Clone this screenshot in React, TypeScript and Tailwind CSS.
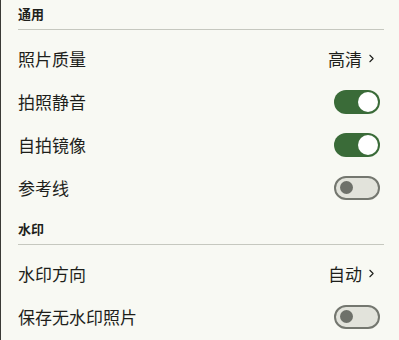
import { ChevronRight } from 'lucide-react'

type Row =
  | { label: string; kind: 'value'; value: string }
  | { label: string; kind: 'switch'; on: boolean }

const sections: { title: string; rows: Row[] }[] = [
  {
    title: '通用',
    rows: [
      { label: '照片质量', kind: 'value', value: '高清' },
      { label: '拍照静音', kind: 'switch', on: true },
      { label: '自拍镜像', kind: 'switch', on: true },
      { label: '参考线', kind: 'switch', on: false },
    ],
  },
  {
    title: '水印',
    rows: [
      { label: '水印方向', kind: 'value', value: '自动' },
      { label: '保存无水印照片', kind: 'switch', on: false },
    ],
  },
]

function Toggle({ on }: { on: boolean }) {
  if (on) {
    return (
      <div className="flex h-[24px] w-[46px] items-center justify-end rounded-full bg-[#3a6b38] pr-[2px]">
        <div className="h-[20px] w-[20px] rounded-full bg-white" />
      </div>
    )
  }
  return (
    <div className="flex h-[24px] w-[46px] items-center rounded-full border-2 border-[#74776f] bg-[#e2e3db] pl-[4px]">
      <div className="h-[13px] w-[13px] rounded-full bg-[#6e716a]" />
    </div>
  )
}

export default function App() {
  return (
    <div
      className="h-[340px] w-[399px] overflow-hidden border-l border-[#3a3a36] bg-[#f8f9f3] text-[#1e1f1b]"
      style={{ fontFamily: '"Noto Sans CJK SC", "Noto Sans", sans-serif' }}
    >
      <div className="-mt-[6px] pl-[17px] pr-[15px]">
        {sections.map((section) => (
          <div key={section.title}>
            <div className="pt-[10px] pb-[5px]">
              <h4 className="h-[20px] text-[13px] leading-[20px] font-bold">{section.title}</h4>
            </div>
            <div className="h-px bg-[#c6c8bf]" />
            <div className="pt-[7px]">
              {section.rows.map((row) => (
                <div key={row.label} className="flex h-[43px] items-center justify-between">
                  <span className="text-[17px]">{row.label}</span>
                  {row.kind === 'value' ? (
                    <span className="mr-[6px] flex items-center text-[17px]">
                      {row.value}
                      <ChevronRight className="ml-[3px] h-[13px] w-[13px]" strokeWidth={2} />
                    </span>
                  ) : (
                    <div className="mr-[4px]">
                      <Toggle on={row.on} />
                    </div>
                  )}
                </div>
              ))}
            </div>
          </div>
        ))}
      </div>
    </div>
  )
}
